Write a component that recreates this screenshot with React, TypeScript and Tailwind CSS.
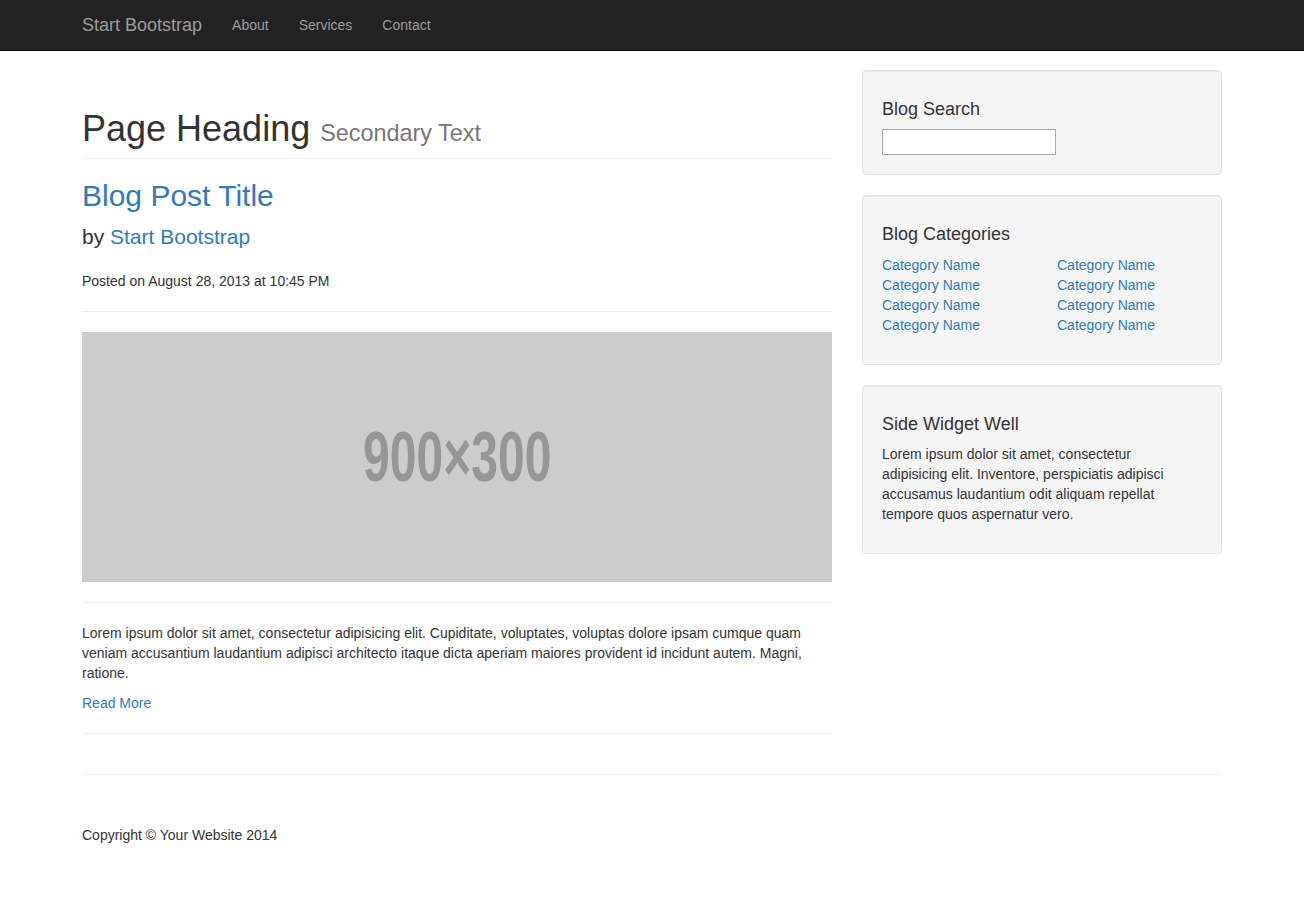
import React from "react";

const navLinks = ["About", "Services", "Contact"];
const categories = [
  "Category Name",
  "Category Name",
  "Category Name",
  "Category Name",
];

const Well = ({ children }: { children: React.ReactNode }) => (
  <div className="mb-[20px] rounded-[4px] border border-[#e3e3e3] bg-[#f5f5f5] p-[19px] shadow-[inset_0_1px_1px_rgba(0,0,0,0.05)]">
    {children}
  </div>
);

const WellTitle = ({ children }: { children: React.ReactNode }) => (
  <h4 className="mt-[10px] mb-[10px] text-[18px] leading-[1.1] font-normal text-[#333]">
    {children}
  </h4>
);

export default function App() {
  return (
    <div className="min-h-screen bg-white text-[14px] leading-[20px] text-[#333] [font-family:'Liberation_Sans',Arial,sans-serif]">
      {/* navbar */}
      <nav className="h-[51px] border-b border-[#080808] bg-[#222]">
        <div className="mx-auto flex w-[1170px] items-center px-[15px]">
          <a className="py-[15px] pr-[15px] text-[18px] leading-[20px] text-[#9d9d9d]" href="#">
            Start Bootstrap
          </a>
          {navLinks.map((link) => (
            <a key={link} className="px-[15px] py-[15px] text-[14px] leading-[20px] text-[#9d9d9d]" href="#">
              {link}
            </a>
          ))}
        </div>
      </nav>

      <div className="mx-auto w-[1170px] px-[15px] pt-[19px]">
        <div className="flex items-start gap-[30px]">
          {/* blog column */}
          <div className="w-[750px]">
            <h1 className="mt-[39px] border-b border-[#eee] pb-[9px] text-[36px] leading-[1.1] font-normal text-[#333]">
              Page Heading{" "}
              <small className="text-[23.4px] leading-none text-[#777]">Secondary Text</small>
            </h1>

            <h2 className="mt-[20px] text-[30px] leading-[1.1] font-normal">
              <a className="text-[#337ab7]" href="#">Blog Post Title</a>
            </h2>
            <p className="mt-[10px] text-[21px] leading-[1.4]">
              by <a className="text-[#337ab7]" href="#">Start Bootstrap</a>
            </p>
            <p className="mt-[20px]">Posted on August 28, 2013 at 10:45 PM</p>
            <hr className="mt-[20px] border-t border-[#eee]" />

            <div className="mt-[20px] flex h-[250px] items-center justify-center bg-[#ccc]">
              <span className="inline-block scale-x-[0.686] text-[70px] leading-none font-bold text-[#969696]">
                900×300
              </span>
            </div>

            <hr className="mt-[20px] border-t border-[#eee]" />
            <p className="mt-[20px]">
              Lorem ipsum dolor sit amet, consectetur adipisicing elit. Cupiditate, voluptates, voluptas
              dolore ipsam cumque quam veniam accusantium laudantium adipisci architecto itaque dicta
              aperiam maiores provident id incidunt autem. Magni, ratione.
            </p>
            <a className="mt-[10px] block w-fit text-[#337ab7]" href="#">Read More</a>
            <hr className="mt-[20px] border-t border-[#eee]" />
          </div>

          {/* sidebar */}
          <div className="w-[360px]">
            <Well>
              <WellTitle>Blog Search</WellTitle>
              <input
                type="text"
                className="-mt-px block h-[26px] w-[174px] border border-[#a9a9a9] bg-white px-[2px] outline-none"
              />
            </Well>

            <Well>
              <WellTitle>Blog Categories</WellTitle>
              <div className="-mx-[15px] mb-[10px] grid grid-cols-2">
                <ul className="px-[15px]">
                  {categories.map((c, i) => (
                    <li key={i}>
                      <a className="text-[#337ab7]" href="#">{c}</a>
                    </li>
                  ))}
                </ul>
                <ul className="px-[15px]">
                  {categories.map((c, i) => (
                    <li key={i}>
                      <a className="text-[#337ab7]" href="#">{c}</a>
                    </li>
                  ))}
                </ul>
              </div>
            </Well>

            <Well>
              <WellTitle>Side Widget Well</WellTitle>
              <p className="mb-[10px] max-w-[305px]">
                Lorem ipsum dolor sit amet, consectetur adipisicing elit. Inventore, perspiciatis
                adipisci accusamus laudantium odit aliquam repellat tempore quos aspernatur vero.
              </p>
            </Well>
          </div>
        </div>

        {/* footer */}
        <hr className="mt-[40px] border-t border-[#eee]" />
        <footer className="pt-[50px] pb-[50px]">
          <p>Copyright © Your Website 2014</p>
        </footer>
      </div>
    </div>
  );
}
